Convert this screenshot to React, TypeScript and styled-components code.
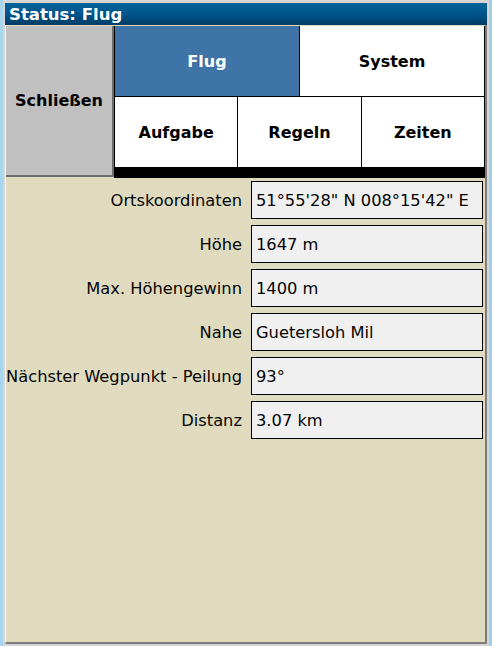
import React from "react";
import styled, { createGlobalStyle } from "styled-components";

const GlobalStyle = createGlobalStyle`
  html, body {
    margin: 0;
    padding: 0;
    width: 492px;
    height: 646px;
    overflow: hidden;
    background: #a9d6ef;
  }
  * {
    box-sizing: border-box;
  }
`;

const tabs = [
  [
    { label: "Flug", active: true },
    { label: "System", active: false },
  ],
  [
    { label: "Aufgabe", active: false },
    { label: "Regeln", active: false },
    { label: "Zeiten", active: false },
  ],
];

const rows = [
  { label: "Ortskoordinaten", value: "51°55'28\" N 008°15'42\" E" },
  { label: "Höhe", value: "1647 m" },
  { label: "Max. Höhengewinn", value: "1400 m" },
  { label: "Nahe", value: "Guetersloh Mil" },
  { label: "Nächster Wegpunkt - Peilung", value: "93°" },
  { label: "Distanz", value: "3.07 km" },
];

const App = () => {
  return (
    <>
      <GlobalStyle />
      <Screen>
        <Window>
          <TitleBar>Status: Flug</TitleBar>
          <Client>
            <TopSection>
              <CloseButton>Schließen</CloseButton>
              <TabPanel>
                {tabs.map((row, i) => (
                  <TabRow key={i}>
                    {row.map((t) => (
                      <Tab key={t.label} $active={t.active}>
                        {t.label}
                      </Tab>
                    ))}
                  </TabRow>
                ))}
              </TabPanel>
            </TopSection>
            <InfoGrid>
              {rows.map((r) => (
                <React.Fragment key={r.label}>
                  <Label>{r.label}</Label>
                  <ValueBox>{r.value}</ValueBox>
                </React.Fragment>
              ))}
            </InfoGrid>
          </Client>
        </Window>
      </Screen>
    </>
  );
};

export default App;

const Screen = styled.div`
  width: 492px;
  height: 646px;
  display: flex;
  padding-left: 3px;
  background: linear-gradient(to right, #a9d6ef 0, #a9d6ef 489px, #9fcfe9 489px);
`;

const Window = styled.div`
  width: 486px;
  height: 646px;
  display: flex;
  flex-direction: column;
  background: #d6d6d6;
  padding: 3px 2px 0 2px;
`;

const TitleBar = styled.div`
  height: 22px;
  flex: none;
  display: flex;
  align-items: center;
  padding-left: 4px;
  color: #ffffff;
  font-family: "DejaVu Sans", sans-serif;
  font-weight: bold;
  font-size: 16.5px;
  background: linear-gradient(to bottom, #02649a 0%, #00538a 55%, #003c64 100%);
`;

const Client = styled.div`
  flex: 1;
  display: flex;
  flex-direction: column;
  background: #e0dbbf;
  border-left: 1px solid #f4f4f4;
  border-right: 2px solid #7c7c7c;
  border-bottom: 2px solid #7c7c7c;
  margin-bottom: 2px;
  padding-top: 1px;
`;

const TopSection = styled.div`
  display: flex;
  height: 152px;
  flex: none;
`;

const CloseButton = styled.div`
  width: 108px;
  height: 151px;
  display: flex;
  align-items: center;
  justify-content: center;
  background: #c0c0c0;
  border-right: 2px solid #6c6c6c;
  border-bottom: 2px solid #6c6c6c;
  color: #000;
  font-family: "DejaVu Sans", sans-serif;
  font-weight: bold;
  font-size: 16px;
`;

const TabPanel = styled.div`
  flex: 1;
  display: flex;
  flex-direction: column;
  gap: 1px;
  background: #000;
  padding: 0 1px 11px 1px;
`;

const TabRow = styled.div`
  flex: 1;
  display: flex;
  gap: 1px;
`;

const Tab = styled.div<{ $active: boolean }>`
  flex: 1;
  display: flex;
  align-items: center;
  justify-content: center;
  background: ${(p) => (p.$active ? "#3f74a6" : "#ffffff")};
  color: ${(p) => (p.$active ? "#ffffff" : "#000000")};
  font-family: "DejaVu Sans", sans-serif;
  font-weight: bold;
  font-size: 16px;
`;

const InfoGrid = styled.div`
  display: grid;
  grid-template-columns: 1fr 232px;
  grid-auto-rows: 38px;
  column-gap: 9px;
  row-gap: 6px;
  padding: 3px 2px 0 0;
  font-family: "DejaVu Sans", sans-serif;
  font-size: 16.3px;
  color: #050505;
`;

const Label = styled.div`
  display: flex;
  align-items: center;
  justify-content: flex-end;
  white-space: nowrap;
`;

const ValueBox = styled.div`
  display: flex;
  align-items: center;
  padding-left: 4px;
  background: #f0f0f0;
  border: 1px solid #000;
  white-space: nowrap;
  overflow: hidden;
`;
